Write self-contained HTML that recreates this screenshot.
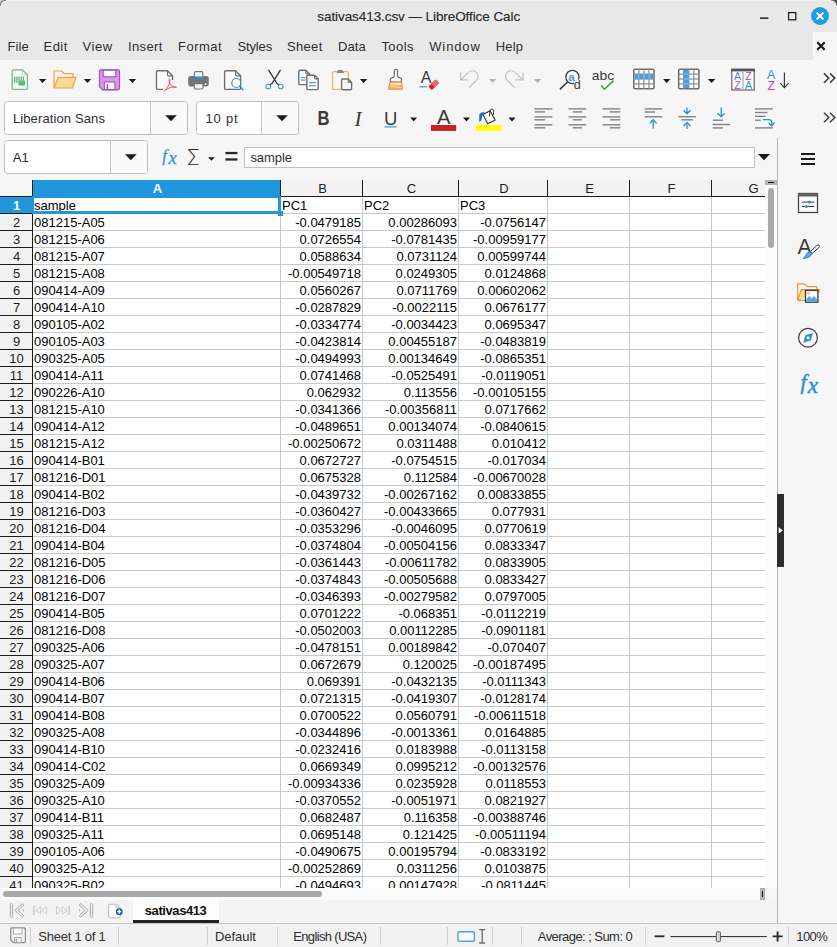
<!DOCTYPE html>
<html><head><meta charset="utf-8"><title>sativas413.csv — LibreOffice Calc</title>
<style>
*{box-sizing:border-box;margin:0;padding:0}
html,body{width:837px;height:947px;overflow:hidden;background:#f6f6f6}
body{position:relative;font-family:"Liberation Sans","DejaVu Sans",sans-serif;color:#1c1c1c;font-size:13px}
.abs{position:absolute}
.t{position:absolute;white-space:pre;line-height:1}
#title{left:0;top:0;width:837px;height:60px;background:#e8e8e8;border-top:1px solid #f0f0f0}
#grid{left:0;top:180px;width:765px;height:708px;background:#fff;overflow:hidden}
.cell{position:absolute;font-size:13px;line-height:17px;height:17px;white-space:nowrap;color:#000;overflow:hidden}
.num{text-align:right}
.rh{position:absolute;left:0;width:33px;height:17px;background:#f2f2f2;border-right:1px solid #1c1c1c;border-bottom:1px solid #1c1c1c;text-align:center;font-size:13px;line-height:17px;color:#1c1c1c;padding-left:1px}
.ch{position:absolute;top:0;height:17px;background:#f2f2f2;border-right:1px solid #1c1c1c;border-bottom:1px solid #1c1c1c;text-align:center;font-size:13px;line-height:18px;color:#1c1c1c;padding-left:2px}
.hl{position:absolute;left:33px;width:732px;height:1px;background:#c9c9c9}
.vl{position:absolute;top:17px;width:1px;height:700px;background:#c9c9c9}
.sel{background:#2196dc !important;color:#fff !important;font-weight:bold}
.box{position:absolute;background:#fff;border:1px solid #bebebe;border-radius:3.5px;overflow:hidden}
.box i{position:absolute;top:0;bottom:0;right:0;background:#fafafa;border-left:1px solid #c4c4c4}
.sep{position:absolute;top:927px;width:1px;height:18px;background:#cfcfcf}
#ov{position:absolute;left:0;top:0}
</style></head><body>

<div id="title" class="abs"></div>
<div class="abs" style="left:813px;top:32px;width:24px;height:28px;background:#f6f6f6"></div>
<div class="abs" style="left:0;top:0;width:6px;height:6px;background:radial-gradient(circle at 6px 6px,#e8e8e8 4.4px,#f2f2f2 4.9px,#7a7a7a 5.7px,#b8b8b8 6.6px,#d0d0d0 7.6px)"></div>
<div class="abs" style="left:831px;top:0;width:6px;height:6px;background:radial-gradient(circle at 0px 6px,#e8e8e8 4.4px,#f2f2f2 4.9px,#7a7a7a 5.7px,#4a4a4a 6.8px)"></div>
<div class="box" style="left:4px;top:101px;width:184px;height:34px"><i style="width:37px"></i></div>
<div class="box" style="left:196px;top:101px;width:103px;height:34px"><i style="width:37px"></i></div>
<div class="box" style="left:4px;top:140px;width:144px;height:34px"><i style="width:37px"></i></div>
<div class="abs" style="left:244px;top:147px;width:511px;height:21px;background:#fff;border:1px solid #c0c0c0"></div>
<div id="grid" class="abs">
<div class="abs" style="left:0;top:0;width:33px;height:17px;background:#f6f6f6;border-right:1px solid #1c1c1c;border-bottom:1px solid #1c1c1c"></div>
<div class="ch sel" style="left:33px;width:248px">A</div>
<div class="ch" style="left:281px;width:82px">B</div>
<div class="ch" style="left:363px;width:96px">C</div>
<div class="ch" style="left:459px;width:89px">D</div>
<div class="ch" style="left:548px;width:82px">E</div>
<div class="ch" style="left:630px;width:82px">F</div>
<div class="ch" style="left:712px;width:82px">G</div>
<div class="rh sel" style="top:17px">1</div>
<div class="hl" style="top:33px"></div>
<div class="rh" style="top:34px">2</div>
<div class="hl" style="top:50px"></div>
<div class="rh" style="top:51px">3</div>
<div class="hl" style="top:67px"></div>
<div class="rh" style="top:68px">4</div>
<div class="hl" style="top:84px"></div>
<div class="rh" style="top:85px">5</div>
<div class="hl" style="top:101px"></div>
<div class="rh" style="top:102px">6</div>
<div class="hl" style="top:118px"></div>
<div class="rh" style="top:119px">7</div>
<div class="hl" style="top:135px"></div>
<div class="rh" style="top:136px">8</div>
<div class="hl" style="top:152px"></div>
<div class="rh" style="top:153px">9</div>
<div class="hl" style="top:169px"></div>
<div class="rh" style="top:170px">10</div>
<div class="hl" style="top:186px"></div>
<div class="rh" style="top:187px">11</div>
<div class="hl" style="top:203px"></div>
<div class="rh" style="top:204px">12</div>
<div class="hl" style="top:220px"></div>
<div class="rh" style="top:221px">13</div>
<div class="hl" style="top:237px"></div>
<div class="rh" style="top:238px">14</div>
<div class="hl" style="top:254px"></div>
<div class="rh" style="top:255px">15</div>
<div class="hl" style="top:271px"></div>
<div class="rh" style="top:272px">16</div>
<div class="hl" style="top:288px"></div>
<div class="rh" style="top:289px">17</div>
<div class="hl" style="top:305px"></div>
<div class="rh" style="top:306px">18</div>
<div class="hl" style="top:322px"></div>
<div class="rh" style="top:323px">19</div>
<div class="hl" style="top:339px"></div>
<div class="rh" style="top:340px">20</div>
<div class="hl" style="top:356px"></div>
<div class="rh" style="top:357px">21</div>
<div class="hl" style="top:373px"></div>
<div class="rh" style="top:374px">22</div>
<div class="hl" style="top:390px"></div>
<div class="rh" style="top:391px">23</div>
<div class="hl" style="top:407px"></div>
<div class="rh" style="top:408px">24</div>
<div class="hl" style="top:424px"></div>
<div class="rh" style="top:425px">25</div>
<div class="hl" style="top:441px"></div>
<div class="rh" style="top:442px">26</div>
<div class="hl" style="top:458px"></div>
<div class="rh" style="top:459px">27</div>
<div class="hl" style="top:475px"></div>
<div class="rh" style="top:476px">28</div>
<div class="hl" style="top:492px"></div>
<div class="rh" style="top:493px">29</div>
<div class="hl" style="top:509px"></div>
<div class="rh" style="top:510px">30</div>
<div class="hl" style="top:526px"></div>
<div class="rh" style="top:527px">31</div>
<div class="hl" style="top:543px"></div>
<div class="rh" style="top:544px">32</div>
<div class="hl" style="top:560px"></div>
<div class="rh" style="top:561px">33</div>
<div class="hl" style="top:577px"></div>
<div class="rh" style="top:578px">34</div>
<div class="hl" style="top:594px"></div>
<div class="rh" style="top:595px">35</div>
<div class="hl" style="top:611px"></div>
<div class="rh" style="top:612px">36</div>
<div class="hl" style="top:628px"></div>
<div class="rh" style="top:629px">37</div>
<div class="hl" style="top:645px"></div>
<div class="rh" style="top:646px">38</div>
<div class="hl" style="top:662px"></div>
<div class="rh" style="top:663px">39</div>
<div class="hl" style="top:679px"></div>
<div class="rh" style="top:680px">40</div>
<div class="hl" style="top:696px"></div>
<div class="rh" style="top:697px">41</div>
<div class="hl" style="top:713px"></div>
<div class="vl" style="left:280px"></div>
<div class="vl" style="left:362px"></div>
<div class="vl" style="left:458px"></div>
<div class="vl" style="left:547px"></div>
<div class="vl" style="left:629px"></div>
<div class="vl" style="left:711px"></div>
<div class="vl" style="left:793px"></div>
<div class="cell" style="left:33px;top:17px;width:247px;padding-left:1px">sample</div>
<div class="cell" style="left:281px;top:17px;width:81px;padding-left:1px">PC1</div>
<div class="cell" style="left:363px;top:17px;width:95px;padding-left:1px">PC2</div>
<div class="cell" style="left:459px;top:17px;width:88px;padding-left:1px">PC3</div>
<div class="cell" style="left:33px;top:34px;width:247px;padding-left:1px">081215-A05</div>
<div class="cell num" style="left:281px;top:34px;width:81px;padding-right:1px">-0.0479185</div>
<div class="cell num" style="left:363px;top:34px;width:95px;padding-right:1px">0.00286093</div>
<div class="cell num" style="left:459px;top:34px;width:88px;padding-right:1px">-0.0756147</div>
<div class="cell" style="left:33px;top:51px;width:247px;padding-left:1px">081215-A06</div>
<div class="cell num" style="left:281px;top:51px;width:81px;padding-right:1px">0.0726554</div>
<div class="cell num" style="left:363px;top:51px;width:95px;padding-right:1px">-0.0781435</div>
<div class="cell num" style="left:459px;top:51px;width:88px;padding-right:1px">-0.00959177</div>
<div class="cell" style="left:33px;top:68px;width:247px;padding-left:1px">081215-A07</div>
<div class="cell num" style="left:281px;top:68px;width:81px;padding-right:1px">0.0588634</div>
<div class="cell num" style="left:363px;top:68px;width:95px;padding-right:1px">0.0731124</div>
<div class="cell num" style="left:459px;top:68px;width:88px;padding-right:1px">0.00599744</div>
<div class="cell" style="left:33px;top:85px;width:247px;padding-left:1px">081215-A08</div>
<div class="cell num" style="left:281px;top:85px;width:81px;padding-right:1px">-0.00549718</div>
<div class="cell num" style="left:363px;top:85px;width:95px;padding-right:1px">0.0249305</div>
<div class="cell num" style="left:459px;top:85px;width:88px;padding-right:1px">0.0124868</div>
<div class="cell" style="left:33px;top:102px;width:247px;padding-left:1px">090414-A09</div>
<div class="cell num" style="left:281px;top:102px;width:81px;padding-right:1px">0.0560267</div>
<div class="cell num" style="left:363px;top:102px;width:95px;padding-right:1px">0.0711769</div>
<div class="cell num" style="left:459px;top:102px;width:88px;padding-right:1px">0.00602062</div>
<div class="cell" style="left:33px;top:119px;width:247px;padding-left:1px">090414-A10</div>
<div class="cell num" style="left:281px;top:119px;width:81px;padding-right:1px">-0.0287829</div>
<div class="cell num" style="left:363px;top:119px;width:95px;padding-right:1px">-0.0022115</div>
<div class="cell num" style="left:459px;top:119px;width:88px;padding-right:1px">0.0676177</div>
<div class="cell" style="left:33px;top:136px;width:247px;padding-left:1px">090105-A02</div>
<div class="cell num" style="left:281px;top:136px;width:81px;padding-right:1px">-0.0334774</div>
<div class="cell num" style="left:363px;top:136px;width:95px;padding-right:1px">-0.0034423</div>
<div class="cell num" style="left:459px;top:136px;width:88px;padding-right:1px">0.0695347</div>
<div class="cell" style="left:33px;top:153px;width:247px;padding-left:1px">090105-A03</div>
<div class="cell num" style="left:281px;top:153px;width:81px;padding-right:1px">-0.0423814</div>
<div class="cell num" style="left:363px;top:153px;width:95px;padding-right:1px">0.00455187</div>
<div class="cell num" style="left:459px;top:153px;width:88px;padding-right:1px">-0.0483819</div>
<div class="cell" style="left:33px;top:170px;width:247px;padding-left:1px">090325-A05</div>
<div class="cell num" style="left:281px;top:170px;width:81px;padding-right:1px">-0.0494993</div>
<div class="cell num" style="left:363px;top:170px;width:95px;padding-right:1px">0.00134649</div>
<div class="cell num" style="left:459px;top:170px;width:88px;padding-right:1px">-0.0865351</div>
<div class="cell" style="left:33px;top:187px;width:247px;padding-left:1px">090414-A11</div>
<div class="cell num" style="left:281px;top:187px;width:81px;padding-right:1px">0.0741468</div>
<div class="cell num" style="left:363px;top:187px;width:95px;padding-right:1px">-0.0525491</div>
<div class="cell num" style="left:459px;top:187px;width:88px;padding-right:1px">-0.0119051</div>
<div class="cell" style="left:33px;top:204px;width:247px;padding-left:1px">090226-A10</div>
<div class="cell num" style="left:281px;top:204px;width:81px;padding-right:1px">0.062932</div>
<div class="cell num" style="left:363px;top:204px;width:95px;padding-right:1px">0.113556</div>
<div class="cell num" style="left:459px;top:204px;width:88px;padding-right:1px">-0.00105155</div>
<div class="cell" style="left:33px;top:221px;width:247px;padding-left:1px">081215-A10</div>
<div class="cell num" style="left:281px;top:221px;width:81px;padding-right:1px">-0.0341366</div>
<div class="cell num" style="left:363px;top:221px;width:95px;padding-right:1px">-0.00356811</div>
<div class="cell num" style="left:459px;top:221px;width:88px;padding-right:1px">0.0717662</div>
<div class="cell" style="left:33px;top:238px;width:247px;padding-left:1px">090414-A12</div>
<div class="cell num" style="left:281px;top:238px;width:81px;padding-right:1px">-0.0489651</div>
<div class="cell num" style="left:363px;top:238px;width:95px;padding-right:1px">0.00134074</div>
<div class="cell num" style="left:459px;top:238px;width:88px;padding-right:1px">-0.0840615</div>
<div class="cell" style="left:33px;top:255px;width:247px;padding-left:1px">081215-A12</div>
<div class="cell num" style="left:281px;top:255px;width:81px;padding-right:1px">-0.00250672</div>
<div class="cell num" style="left:363px;top:255px;width:95px;padding-right:1px">0.0311488</div>
<div class="cell num" style="left:459px;top:255px;width:88px;padding-right:1px">0.010412</div>
<div class="cell" style="left:33px;top:272px;width:247px;padding-left:1px">090414-B01</div>
<div class="cell num" style="left:281px;top:272px;width:81px;padding-right:1px">0.0672727</div>
<div class="cell num" style="left:363px;top:272px;width:95px;padding-right:1px">-0.0754515</div>
<div class="cell num" style="left:459px;top:272px;width:88px;padding-right:1px">-0.017034</div>
<div class="cell" style="left:33px;top:289px;width:247px;padding-left:1px">081216-D01</div>
<div class="cell num" style="left:281px;top:289px;width:81px;padding-right:1px">0.0675328</div>
<div class="cell num" style="left:363px;top:289px;width:95px;padding-right:1px">0.112584</div>
<div class="cell num" style="left:459px;top:289px;width:88px;padding-right:1px">-0.00670028</div>
<div class="cell" style="left:33px;top:306px;width:247px;padding-left:1px">090414-B02</div>
<div class="cell num" style="left:281px;top:306px;width:81px;padding-right:1px">-0.0439732</div>
<div class="cell num" style="left:363px;top:306px;width:95px;padding-right:1px">-0.00267162</div>
<div class="cell num" style="left:459px;top:306px;width:88px;padding-right:1px">0.00833855</div>
<div class="cell" style="left:33px;top:323px;width:247px;padding-left:1px">081216-D03</div>
<div class="cell num" style="left:281px;top:323px;width:81px;padding-right:1px">-0.0360427</div>
<div class="cell num" style="left:363px;top:323px;width:95px;padding-right:1px">-0.00433665</div>
<div class="cell num" style="left:459px;top:323px;width:88px;padding-right:1px">0.077931</div>
<div class="cell" style="left:33px;top:340px;width:247px;padding-left:1px">081216-D04</div>
<div class="cell num" style="left:281px;top:340px;width:81px;padding-right:1px">-0.0353296</div>
<div class="cell num" style="left:363px;top:340px;width:95px;padding-right:1px">-0.0046095</div>
<div class="cell num" style="left:459px;top:340px;width:88px;padding-right:1px">0.0770619</div>
<div class="cell" style="left:33px;top:357px;width:247px;padding-left:1px">090414-B04</div>
<div class="cell num" style="left:281px;top:357px;width:81px;padding-right:1px">-0.0374804</div>
<div class="cell num" style="left:363px;top:357px;width:95px;padding-right:1px">-0.00504156</div>
<div class="cell num" style="left:459px;top:357px;width:88px;padding-right:1px">0.0833347</div>
<div class="cell" style="left:33px;top:374px;width:247px;padding-left:1px">081216-D05</div>
<div class="cell num" style="left:281px;top:374px;width:81px;padding-right:1px">-0.0361443</div>
<div class="cell num" style="left:363px;top:374px;width:95px;padding-right:1px">-0.00611782</div>
<div class="cell num" style="left:459px;top:374px;width:88px;padding-right:1px">0.0833905</div>
<div class="cell" style="left:33px;top:391px;width:247px;padding-left:1px">081216-D06</div>
<div class="cell num" style="left:281px;top:391px;width:81px;padding-right:1px">-0.0374843</div>
<div class="cell num" style="left:363px;top:391px;width:95px;padding-right:1px">-0.00505688</div>
<div class="cell num" style="left:459px;top:391px;width:88px;padding-right:1px">0.0833427</div>
<div class="cell" style="left:33px;top:408px;width:247px;padding-left:1px">081216-D07</div>
<div class="cell num" style="left:281px;top:408px;width:81px;padding-right:1px">-0.0346393</div>
<div class="cell num" style="left:363px;top:408px;width:95px;padding-right:1px">-0.00279582</div>
<div class="cell num" style="left:459px;top:408px;width:88px;padding-right:1px">0.0797005</div>
<div class="cell" style="left:33px;top:425px;width:247px;padding-left:1px">090414-B05</div>
<div class="cell num" style="left:281px;top:425px;width:81px;padding-right:1px">0.0701222</div>
<div class="cell num" style="left:363px;top:425px;width:95px;padding-right:1px">-0.068351</div>
<div class="cell num" style="left:459px;top:425px;width:88px;padding-right:1px">-0.0112219</div>
<div class="cell" style="left:33px;top:442px;width:247px;padding-left:1px">081216-D08</div>
<div class="cell num" style="left:281px;top:442px;width:81px;padding-right:1px">-0.0502003</div>
<div class="cell num" style="left:363px;top:442px;width:95px;padding-right:1px">0.00112285</div>
<div class="cell num" style="left:459px;top:442px;width:88px;padding-right:1px">-0.0901181</div>
<div class="cell" style="left:33px;top:459px;width:247px;padding-left:1px">090325-A06</div>
<div class="cell num" style="left:281px;top:459px;width:81px;padding-right:1px">-0.0478151</div>
<div class="cell num" style="left:363px;top:459px;width:95px;padding-right:1px">0.00189842</div>
<div class="cell num" style="left:459px;top:459px;width:88px;padding-right:1px">-0.070407</div>
<div class="cell" style="left:33px;top:476px;width:247px;padding-left:1px">090325-A07</div>
<div class="cell num" style="left:281px;top:476px;width:81px;padding-right:1px">0.0672679</div>
<div class="cell num" style="left:363px;top:476px;width:95px;padding-right:1px">0.120025</div>
<div class="cell num" style="left:459px;top:476px;width:88px;padding-right:1px">-0.00187495</div>
<div class="cell" style="left:33px;top:493px;width:247px;padding-left:1px">090414-B06</div>
<div class="cell num" style="left:281px;top:493px;width:81px;padding-right:1px">0.069391</div>
<div class="cell num" style="left:363px;top:493px;width:95px;padding-right:1px">-0.0432135</div>
<div class="cell num" style="left:459px;top:493px;width:88px;padding-right:1px">-0.0111343</div>
<div class="cell" style="left:33px;top:510px;width:247px;padding-left:1px">090414-B07</div>
<div class="cell num" style="left:281px;top:510px;width:81px;padding-right:1px">0.0721315</div>
<div class="cell num" style="left:363px;top:510px;width:95px;padding-right:1px">-0.0419307</div>
<div class="cell num" style="left:459px;top:510px;width:88px;padding-right:1px">-0.0128174</div>
<div class="cell" style="left:33px;top:527px;width:247px;padding-left:1px">090414-B08</div>
<div class="cell num" style="left:281px;top:527px;width:81px;padding-right:1px">0.0700522</div>
<div class="cell num" style="left:363px;top:527px;width:95px;padding-right:1px">0.0560791</div>
<div class="cell num" style="left:459px;top:527px;width:88px;padding-right:1px">-0.00611518</div>
<div class="cell" style="left:33px;top:544px;width:247px;padding-left:1px">090325-A08</div>
<div class="cell num" style="left:281px;top:544px;width:81px;padding-right:1px">-0.0344896</div>
<div class="cell num" style="left:363px;top:544px;width:95px;padding-right:1px">-0.0013361</div>
<div class="cell num" style="left:459px;top:544px;width:88px;padding-right:1px">0.0164885</div>
<div class="cell" style="left:33px;top:561px;width:247px;padding-left:1px">090414-B10</div>
<div class="cell num" style="left:281px;top:561px;width:81px;padding-right:1px">-0.0232416</div>
<div class="cell num" style="left:363px;top:561px;width:95px;padding-right:1px">0.0183988</div>
<div class="cell num" style="left:459px;top:561px;width:88px;padding-right:1px">-0.0113158</div>
<div class="cell" style="left:33px;top:578px;width:247px;padding-left:1px">090414-C02</div>
<div class="cell num" style="left:281px;top:578px;width:81px;padding-right:1px">0.0669349</div>
<div class="cell num" style="left:363px;top:578px;width:95px;padding-right:1px">0.0995212</div>
<div class="cell num" style="left:459px;top:578px;width:88px;padding-right:1px">-0.00132576</div>
<div class="cell" style="left:33px;top:595px;width:247px;padding-left:1px">090325-A09</div>
<div class="cell num" style="left:281px;top:595px;width:81px;padding-right:1px">-0.00934336</div>
<div class="cell num" style="left:363px;top:595px;width:95px;padding-right:1px">0.0235928</div>
<div class="cell num" style="left:459px;top:595px;width:88px;padding-right:1px">0.0118553</div>
<div class="cell" style="left:33px;top:612px;width:247px;padding-left:1px">090325-A10</div>
<div class="cell num" style="left:281px;top:612px;width:81px;padding-right:1px">-0.0370552</div>
<div class="cell num" style="left:363px;top:612px;width:95px;padding-right:1px">-0.0051971</div>
<div class="cell num" style="left:459px;top:612px;width:88px;padding-right:1px">0.0821927</div>
<div class="cell" style="left:33px;top:629px;width:247px;padding-left:1px">090414-B11</div>
<div class="cell num" style="left:281px;top:629px;width:81px;padding-right:1px">0.0682487</div>
<div class="cell num" style="left:363px;top:629px;width:95px;padding-right:1px">0.116358</div>
<div class="cell num" style="left:459px;top:629px;width:88px;padding-right:1px">-0.00388746</div>
<div class="cell" style="left:33px;top:646px;width:247px;padding-left:1px">090325-A11</div>
<div class="cell num" style="left:281px;top:646px;width:81px;padding-right:1px">0.0695148</div>
<div class="cell num" style="left:363px;top:646px;width:95px;padding-right:1px">0.121425</div>
<div class="cell num" style="left:459px;top:646px;width:88px;padding-right:1px">-0.00511194</div>
<div class="cell" style="left:33px;top:663px;width:247px;padding-left:1px">090105-A06</div>
<div class="cell num" style="left:281px;top:663px;width:81px;padding-right:1px">-0.0490675</div>
<div class="cell num" style="left:363px;top:663px;width:95px;padding-right:1px">0.00195794</div>
<div class="cell num" style="left:459px;top:663px;width:88px;padding-right:1px">-0.0833192</div>
<div class="cell" style="left:33px;top:680px;width:247px;padding-left:1px">090325-A12</div>
<div class="cell num" style="left:281px;top:680px;width:81px;padding-right:1px">-0.00252869</div>
<div class="cell num" style="left:363px;top:680px;width:95px;padding-right:1px">0.0311256</div>
<div class="cell num" style="left:459px;top:680px;width:88px;padding-right:1px">0.0103875</div>
<div class="cell" style="left:33px;top:697px;width:247px;padding-left:1px">090325-B02</div>
<div class="cell num" style="left:281px;top:697px;width:81px;padding-right:1px">-0.0494693</div>
<div class="cell num" style="left:363px;top:697px;width:95px;padding-right:1px">0.00147928</div>
<div class="cell num" style="left:459px;top:697px;width:88px;padding-right:1px">-0.0811445</div>
<div class="abs" style="left:32px;top:16px;width:249px;height:18px;border:solid #2196dc;border-width:2px 3px 3px 2px"></div>
<div class="abs" style="left:278px;top:31px;width:5px;height:5px;background:#2196dc"></div>
</div>
<div class="abs" style="left:765px;top:180px;width:12px;height:708px;background:#fbfbfb"></div>
<div class="abs" style="left:765px;top:180px;width:12px;height:5px;background:#b2b2b2"></div>
<div class="abs" style="left:768px;top:182px;width:6px;height:1px;background:#111"></div>
<div class="abs" style="left:768px;top:188px;width:6px;height:60px;background:#a9a9a9;border-radius:3px"></div>
<div class="abs" style="left:777px;top:138px;width:1px;height:786px;background:#b8b8b8"></div>
<div class="abs" style="left:777px;top:494px;width:7px;height:73px;background:#2d2d2d"></div>
<div class="abs" style="left:0;top:888px;width:765px;height:12px;background:#fbfbfb"></div>
<div class="abs" style="left:3px;top:891px;width:319px;height:6px;background:#a9a9a9;border-radius:3px"></div>
<div class="abs" style="left:760px;top:888px;width:5px;height:12px;background:#b2b2b2"></div>
<div class="abs" style="left:762px;top:891px;width:1px;height:6px;background:#111"></div>
<div class="abs" style="left:0;top:900px;width:777px;height:23px;background:#f3f3f3"></div>
<div class="abs" style="left:133px;top:900px;width:86px;height:23px;background:#fcfcfc;border-bottom:3px solid #222"></div>
<div class="abs" style="left:0;top:923px;width:837px;height:1px;background:#c4c4c4"></div>
<div class="abs" style="left:0;top:924px;width:837px;height:23px;background:#f1f1f1"></div>
<div class="sep" style="left:30px"></div>
<div class="sep" style="left:118px"></div>
<div class="sep" style="left:207px"></div>
<div class="sep" style="left:277px"></div>
<div class="sep" style="left:380px"></div>
<div class="sep" style="left:447px"></div>
<div class="sep" style="left:492px"></div>
<div class="sep" style="left:521px"></div>
<div class="sep" style="left:645px"></div>
<div class="sep" style="left:788px"></div>
<div class="t" style="left:317.30px;top:9.57px;font-size:13.5px;letter-spacing:-0.077px;color:#2a2a2a;-webkit-text-stroke:0.15px #2a2a2a;">sativas413.csv — LibreOffice Calc</div>
<div class="t" style="left:7.60px;top:39.60px;font-size:13px;letter-spacing:0.037px;color:#2e2e2e;">File</div>
<div class="t" style="left:43.50px;top:39.60px;font-size:13px;letter-spacing:0.473px;color:#2e2e2e;">Edit</div>
<div class="t" style="left:82.60px;top:39.60px;font-size:13px;letter-spacing:0.512px;color:#2e2e2e;">View</div>
<div class="t" style="left:128.10px;top:39.60px;font-size:13px;letter-spacing:0.331px;color:#2e2e2e;">Insert</div>
<div class="t" style="left:178.00px;top:39.60px;font-size:13px;letter-spacing:0.505px;color:#2e2e2e;">Format</div>
<div class="t" style="left:237.50px;top:39.60px;font-size:13px;letter-spacing:-0.151px;color:#2e2e2e;">Styles</div>
<div class="t" style="left:287.00px;top:39.60px;font-size:13px;letter-spacing:0.323px;color:#2e2e2e;">Sheet</div>
<div class="t" style="left:337.90px;top:39.60px;font-size:13px;letter-spacing:0.158px;color:#2e2e2e;">Data</div>
<div class="t" style="left:381.40px;top:39.60px;font-size:13px;letter-spacing:0.428px;color:#2e2e2e;">Tools</div>
<div class="t" style="left:429.20px;top:39.60px;font-size:13px;letter-spacing:0.892px;color:#2e2e2e;">Window</div>
<div class="t" style="left:495.80px;top:39.60px;font-size:13px;letter-spacing:0.188px;color:#2e2e2e;">Help</div>
<div class="t" style="left:12.90px;top:112.00px;font-size:13px;letter-spacing:0.124px;color:#2e2e2e;">Liberation Sans</div>
<div class="t" style="left:205.50px;top:112.00px;font-size:13px;letter-spacing:0.816px;color:#2e2e2e;">10 pt</div>
<div class="t" style="left:12.70px;top:151.00px;font-size:13px;letter-spacing:0.247px;color:#2e2e2e;">A1</div>
<div class="t" style="left:250.40px;top:151.00px;font-size:13px;letter-spacing:-0.054px;color:#2e2e2e;">sample</div>
<div class="t" style="left:144.80px;top:903.70px;font-size:13px;letter-spacing:-0.418px;color:#111;font-weight:bold;">sativas413</div>
<div class="t" style="left:38.20px;top:930.00px;font-size:13px;letter-spacing:-0.227px;color:#2e2e2e;">Sheet 1 of 1</div>
<div class="t" style="left:214.90px;top:930.00px;font-size:13px;letter-spacing:-0.029px;color:#2e2e2e;">Default</div>
<div class="t" style="left:293.30px;top:930.00px;font-size:13px;letter-spacing:-0.665px;color:#2e2e2e;">English (USA)</div>
<div class="t" style="left:537.80px;top:930.00px;font-size:13px;letter-spacing:-0.555px;color:#2e2e2e;">Average: ; Sum: 0</div>
<div class="t" style="left:796.30px;top:930.00px;font-size:13px;letter-spacing:-0.588px;color:#2e2e2e;">100%</div>
<svg id="ov" width="837" height="947" viewBox="0 0 837 947" font-family="Liberation Sans, sans-serif">
<rect x="760" y="17.4" width="8.4" height="1.5" fill="#222"/>
<rect x="788.6" y="12.6" width="7.2" height="7.2" fill="none" stroke="#222" stroke-width="1.3"/>
<circle cx="820" cy="16" r="9" fill="#1f9ede"/>
<path d="M816.6 12.6l6.8 6.8M823.4 12.6l-6.8 6.8" stroke="#fff" stroke-width="2" stroke-linecap="butt"/>
<path d="M817.3 42.3l7.4 7.4M824.7 42.3l-7.4 7.4" stroke="#1a1a1a" stroke-width="2.2"/>
<path d="M38.90 78.90h7.4l-3.70 4.2z" fill="#1a1a1a"/>
<path d="M83.80 78.90h7.4l-3.70 4.2z" fill="#1a1a1a"/>
<path d="M128.70 78.90h7.4l-3.70 4.2z" fill="#1a1a1a"/>
<path d="M359.90 78.90h7.4l-3.70 4.2z" fill="#1a1a1a"/>
<path d="M663.00 78.90h7.4l-3.70 4.2z" fill="#1a1a1a"/>
<path d="M707.90 78.90h7.4l-3.70 4.2z" fill="#1a1a1a"/>
<path d="M488.90 78.90h7.4l-3.70 4.2z" fill="#b4b4b4"/>
<path d="M533.80 78.90h7.4l-3.70 4.2z" fill="#b4b4b4"/>
<path d="M410.10 117.50h7l-3.50 4z" fill="#1a1a1a"/>
<path d="M463.00 117.50h7l-3.50 4z" fill="#1a1a1a"/>
<path d="M508.50 117.50h7l-3.50 4z" fill="#1a1a1a"/>
<path d="M208.10 157.30h6.6l-3.30 3.4z" fill="#1a1a1a"/>
<path d="M165.20 115.20h11.6l-5.80 6z" fill="#1a1a1a"/>
<path d="M276.20 115.20h11.6l-5.80 6z" fill="#1a1a1a"/>
<path d="M125.00 154.30h11.6l-5.80 6z" fill="#1a1a1a"/>
<path d="M758.00 154.00h12l-6.00 6.2z" fill="#1a1a1a"/>
<g><path d="M13.400 69.800h8.600l5.400 5v13.400q0 1.200-1.200 1.200h-12.800q-1.200 0-1.200-1.200v-17.200q0-1.200 1.200-1.200z" fill="#fff" stroke="#72b88b" stroke-width="1.300" stroke-linejoin="round"/><path d="M22 69.800v3.800q0 1.200 1.200 1.200h4.200" fill="none" stroke="#9fd0b0" stroke-width="1"/><path d="M14.700 76.500v6.600M16.900 76.500v6.600M19.100 76.500v4M21.300 76.500v4M23.400 76.500v4" stroke="#6ab184" stroke-width="1.400"/><rect x="18.400" y="80.600" width="6.600" height="4.800" rx=".6" fill="#4cba6c"/><path d="M19.600 82.300h4.200" stroke="#9fe0b0" stroke-width=".8" stroke-dasharray="1.200 .600"/></g>
<g stroke="#ef9f4f" stroke-width="1.2" stroke-linejoin="round"><path d="M54 87.5v-16.5h7.5l2.5 2.6h9v4" fill="#fef9f0"/><path d="M54 88l4.2-10.6h17.8l-3.6 10.6z" fill="#f9dd8f"/></g>
<g><path d="M100.5 69.8h17.5q1.5 0 1.5 1.5v17q0 1.5-1.5 1.5h-15.5l-3-3v-15.5q0-1.5 1-1.5z" fill="#d899e2" stroke="#ab4cc0" stroke-width="1.2"/><rect x="103.200" y="70.200" width="12.600" height="6.600" fill="#fff" stroke="#a341b9" stroke-width="1"/><rect x="104.300" y="82" width="10.600" height="7.600" fill="#fff" stroke="#a341b9" stroke-width="1"/><rect x="106.700" y="84" width="1.300" height="5.200" fill="#a341b9"/></g>
<path d="M157.7 70.8h9.8l5 5v12.400000000000002q0 1.2 -1.2 1.2h-13.6q-1.2 0 -1.2 -1.2v-16.200000000000003q0 -1.2 1.2 -1.2z" fill="#fbfbfb" stroke="#6f6f6f" stroke-width="1.4" stroke-linejoin="round"/><path d="M167.5 70.8v4q0 1 1 1h4" fill="none" stroke="#6f6f6f" stroke-width="1.19" stroke-linejoin="round"/>
<rect x="163" y="80" width="13" height="11" fill="#f6f6f6"/>
<path d="M164.5 90.5c3-2.5 5.2-6.5 5.6-10.5c.1-1.2-1.3-1.2-1.2 0c.4 4 3.2 7 6.8 7.6c1 .1 1-1 0-1c-3.8.2-8 1.7-11.2 3.9z" fill="none" stroke="#e8474c" stroke-width=".9" stroke-linejoin="round"/>
<g><rect x="188.200" y="75.900" width="20.600" height="10.600" rx="2.400" fill="#757575"/><path d="M194.400 77v-4.200q0-1.200 1.200-1.200h6q1.200 0 1.200 1.200v4.200z" fill="#fbfbfb" stroke="#757575" stroke-width="1.100"/><rect x="193" y="76.900" width="11.400" height="2" fill="#2f8fd6"/><path d="M194.200 83.600h8.800v4.200q0 1.200-1.200 1.200h-6.400q-1.200 0-1.200-1.200z" fill="#f2f2f2" stroke="#757575" stroke-width="1.100"/><rect x="204.900" y="83.400" width="1.500" height="1.500" fill="#fff"/></g>
<path d="M225.79999999999998 70.8h9.8l5 5v12.400000000000002q0 1.2 -1.2 1.2h-13.6q-1.2 0 -1.2 -1.2v-16.200000000000003q0 -1.2 1.2 -1.2z" fill="#fbfbfb" stroke="#6f6f6f" stroke-width="1.4" stroke-linejoin="round"/><path d="M235.6 70.8v4q0 1 1 1h4" fill="none" stroke="#6f6f6f" stroke-width="1.19" stroke-linejoin="round"/>
<circle cx="236.300" cy="83" r="4.500" fill="#fff" stroke="#2f8fd6" stroke-width="1.200"/><path d="M239.600 86.300l3.400 3.500" stroke="#2f8fd6" stroke-width="1.400" stroke-linecap="round"/>
<g><path d="M268.8 70.3l8.2 13.2M280.2 70.3l-8.2 13.2" stroke="#3a3a3a" stroke-width="1.4" stroke-linecap="round"/><circle cx="268.2" cy="86.5" r="2.3" fill="#fff" stroke="#3f97da" stroke-width="1.1"/><circle cx="280.7" cy="86.5" r="2.3" fill="#fff" stroke="#3f97da" stroke-width="1.1"/><path d="M272 83.5l-2 1.2M277 83.5l2 1.2" stroke="#3a3a3a" stroke-width="1.3"/></g>
<path d="M300.0 70.2h5.8l3.6 3.6v9.600000000000001q0 1.2 -1.2 1.2h-8.2q-1.2 0 -1.2 -1.2v-12.0q0 -1.2 1.2 -1.2z" fill="#fbfbfb" stroke="#6f6f6f" stroke-width="1.4" stroke-linejoin="round"/><path d="M305.8 70.2v2.6q0 1 1 1h2.6" fill="none" stroke="#6f6f6f" stroke-width="1.19" stroke-linejoin="round"/>
<path d="M301 77.600h4.400M301 80.200h4.400" stroke="#4fa3df" stroke-width="1.200"/>
<path d="M308.0 75.2h6.6000000000000005l3.6 3.6v9.600000000000001q0 1.2 -1.2 1.2h-9.0q-1.2 0 -1.2 -1.2v-12.0q0 -1.2 1.2 -1.2z" fill="#fbfbfb" stroke="#6f6f6f" stroke-width="1.4" stroke-linejoin="round"/><path d="M314.59999999999997 75.2v2.6q0 1 1 1h2.6" fill="none" stroke="#6f6f6f" stroke-width="1.19" stroke-linejoin="round"/>
<path d="M309 82.600h6.800M309 85.600h6.800" stroke="#4fa3df" stroke-width="1.300"/>
<g><rect x="332.6" y="71.6" width="15.8" height="17.8" rx="1.2" fill="#fcfaf8" stroke="#f2ae72" stroke-width="1.3"/><path d="M337.2 72.6l1.4-2.2h3.6l1.4 2.2z" fill="#888" stroke="#777" stroke-width="0.8"/></g>
<path d="M342.8 79h5.3999999999999995l3.4 3.4v6.2q0 1.2 -1.2 1.2h-7.6q-1.2 0 -1.2 -1.2v-8.4q0 -1.2 1.2 -1.2z" fill="#fbfbfb" stroke="#6f6f6f" stroke-width="1.4" stroke-linejoin="round"/><path d="M348.20000000000005 79v2.4q0 1 1 1h2.4" fill="none" stroke="#6f6f6f" stroke-width="1.19" stroke-linejoin="round"/>
<g><path d="M394.300 70.400q1.600-2 3.200 0v5.400q0 1.400 1.400 1.800l1.600.5q1 .4 1 1.400v2.500h-11.200v-2.500q0-1 1-1.400l1.600-.5q1.400-.4 1.400-1.800z" fill="#fcfcfc" stroke="#6f6f6f" stroke-width="1.200" stroke-linejoin="round"/><path d="M390 82h11.600l.8 7.200h-14z" fill="#f7b26c" stroke="#ee8a35" stroke-width="1" stroke-linejoin="round"/><path d="M390.200 83.300h11l.2 1.800l-11.400-.600z" fill="#fdf0e0"/><path d="M389.600 86.200l12.200 1.400" stroke="#fbd9b4" stroke-width=".9"/></g>
<text x="420.800" y="82.700" font-size="16" fill="#3a3a3a">A</text>
<rect x="419.400" y="86.100" width="7.400" height="1.400" fill="#4fa3df"/>
<g transform="rotate(-45 433.700 84.800)"><rect x="428.700" y="82.300" width="10.200" height="5" rx=".8" fill="#d81e1e"/><rect x="432.600" y="82.300" width="6.300" height="5" rx=".8" fill="#f0666e"/></g>
<path d="M460.600 72.400V79.900H468.200M461 79.500L468.400 72.400A5.600 5.600 0 0 1 476.400 80.400L469.100 87.700" fill="none" stroke="#c2c2c2" stroke-width="1.200"/>
<path d="M523.0 72.400V79.900H515.4M522.6 79.500L515.2 72.400A5.600 5.600 0 0 0 507.2 80.400L514.5 87.700" fill="none" stroke="#c2c2c2" stroke-width="1.200"/>
<circle cx="572.4" cy="77" r="6.6" fill="#fff" stroke="#3a3a3a" stroke-width="1.3"/><rect x="574" y="79.600" width="7" height="6" fill="#f6f6f6"/><path d="M567.4 82l-7 6.8" stroke="#3a3a3a" stroke-width="1.7" stroke-linecap="round"/>
<text x="568.300" y="81.300" font-size="11.800" font-weight="bold" fill="#3f9be0">a</text><text x="573.800" y="88.900" font-size="12.600" fill="#3a3a3a">d</text>
<text x="591.8" y="79.8" font-size="12.6" fill="#3a3a3a" textLength="22.4" lengthAdjust="spacingAndGlyphs">abc</text>
<path d="M601 85.6l3.4 3.6l9.2-8.6" fill="none" stroke="#2aa744" stroke-width="1.5"/>
<rect x="633.8" y="69.2" width="20.2" height="19.6" rx="1.4" fill="#fff" stroke="#6a6a6a" stroke-width="1.5"/>
<path d="M638.85 69.2v19.6" stroke="#8a8a8a" stroke-width="1.2"/>
<path d="M643.90 69.2v19.6" stroke="#8a8a8a" stroke-width="1.2"/>
<path d="M648.95 69.2v19.6" stroke="#8a8a8a" stroke-width="1.2"/>
<path d="M633.8 74.10h20.2" stroke="#8a8a8a" stroke-width="1.2"/>
<path d="M633.8 79.00h20.2" stroke="#8a8a8a" stroke-width="1.2"/>
<path d="M633.8 83.90h20.2" stroke="#8a8a8a" stroke-width="1.2"/>
<rect x="634.5" y="74.10" width="18.8" height="4.90" fill="#4a9edc"/>
<path d="M638.85 74.10v4.90" stroke="#8cc2ec" stroke-width="1"/>
<path d="M643.90 74.10v4.90" stroke="#8cc2ec" stroke-width="1"/>
<path d="M648.95 74.10v4.90" stroke="#8cc2ec" stroke-width="1"/>
<rect x="678.7" y="69.2" width="20.2" height="19.6" rx="1.4" fill="#fff" stroke="#6a6a6a" stroke-width="1.5"/>
<path d="M683.75 69.2v19.6" stroke="#8a8a8a" stroke-width="1.2"/>
<path d="M688.80 69.2v19.6" stroke="#8a8a8a" stroke-width="1.2"/>
<path d="M693.85 69.2v19.6" stroke="#8a8a8a" stroke-width="1.2"/>
<path d="M678.7 74.10h20.2" stroke="#8a8a8a" stroke-width="1.2"/>
<path d="M678.7 79.00h20.2" stroke="#8a8a8a" stroke-width="1.2"/>
<path d="M678.7 83.90h20.2" stroke="#8a8a8a" stroke-width="1.2"/>
<rect x="683.75" y="69.9" width="5.05" height="18.200000000000003" fill="#4a9edc"/>
<path d="M683.75 74.10h5.05" stroke="#8cc2ec" stroke-width="1"/>
<path d="M683.75 79.00h5.05" stroke="#8cc2ec" stroke-width="1"/>
<path d="M683.75 83.90h5.05" stroke="#8cc2ec" stroke-width="1"/>
<rect x="731.8" y="69.6" width="22.4" height="20.4" fill="#fff" stroke="#6e6e6e" stroke-width="1.3"/><rect x="731.2" y="68.600" width="23.600" height="2.800" fill="#555"/><path d="M743 71v19" stroke="#b4b4b4" stroke-width="1.4"/>
<text x="734" y="80.4" font-size="10.6" fill="#2f8fd6">A</text><text x="734.2" y="89" font-size="10.6" fill="#b845c4">Z</text>
<text x="745.2" y="80.4" font-size="10.6" fill="#b845c4">Z</text><text x="745" y="89" font-size="10.6" fill="#2f8fd6">A</text>
<text x="767" y="78.6" font-size="12.4" fill="#2f8fd6">A</text><text x="767.6" y="89.6" font-size="12.4" fill="#b845c4">Z</text>
<path d="M784.4 72.4v15M780.2 83.2l4.2 4.4l4.2-4.4" fill="none" stroke="#3a3a3a" stroke-width="1.2"/>
<path d="M824 73.4l4.8 4.7l-4.8 4.7M830 73.4l4.8 4.7l-4.8 4.7" fill="none" stroke="#3a3a3a" stroke-width="1.5"/>
<path d="M824 112.8l4.8 4.7l-4.8 4.7M830 112.8l4.8 4.7l-4.8 4.7" fill="none" stroke="#3a3a3a" stroke-width="1.5"/>
<text x="317.600" y="125.400" font-size="20" font-weight="bold" fill="#3a3a3a" textLength="12" lengthAdjust="spacingAndGlyphs">B</text>
<text x="354.400" y="125.700" font-size="21.500" font-style="italic" font-family="Liberation Serif, serif" fill="#3a3a3a">I</text>
<text x="383.900" y="125" font-size="19" fill="#3a3a3a" textLength="13.400" lengthAdjust="spacingAndGlyphs">U</text><rect x="384.400" y="126.100" width="12.200" height="1.500" fill="#5aaae0"/>
<text x="436.900" y="123.900" font-size="20.200" fill="#3a3a3a">A</text><rect x="431" y="125" width="25.200" height="5.900" fill="#c9211e"/>
<rect x="476" y="125" width="25.2" height="5.8" fill="#ffff00"/>
<g><path d="M483 114.4l7.1-3.6l5 9.4l-7.4 3.5z" fill="#fcfcfc" stroke="#2e2e2e" stroke-width="1.1" stroke-linejoin="round"/><path d="M489.4 116.4l.6-5.600q.6-2 2.200-1.700q1.600.5 1.500 2.400l-.3 3.400" fill="none" stroke="#2e2e2e" stroke-width="1"/><path d="M479.2 121.800v-6.600q.2-3.200 5.200-3.300l-1.300 2.500q-1.500 2.600-1.600 5.800q-.8 1.300-2.300 1.600z" fill="#1f72c8"/></g>
<rect x="534.5" y="108.20" width="17.8" height="1.4" fill="#828282"/>
<rect x="534.5" y="111.20" width="10.6" height="1.4" fill="#828282"/>
<rect x="534.5" y="116.20" width="17.8" height="1.4" fill="#828282"/>
<rect x="534.5" y="119.10" width="10.6" height="1.4" fill="#828282"/>
<rect x="534.5" y="124.10" width="17.8" height="1.4" fill="#828282"/>
<rect x="534.5" y="127.10" width="10.6" height="1.4" fill="#828282"/>
<rect x="568.5" y="108.20" width="17.8" height="1.4" fill="#828282"/>
<rect x="572.7" y="111.20" width="9.4" height="1.4" fill="#828282"/>
<rect x="568.5" y="116.20" width="17.8" height="1.4" fill="#828282"/>
<rect x="572.7" y="119.10" width="9.4" height="1.4" fill="#828282"/>
<rect x="568.5" y="124.10" width="17.8" height="1.4" fill="#828282"/>
<rect x="572.7" y="127.10" width="9.4" height="1.4" fill="#828282"/>
<rect x="602.6" y="108.20" width="17.8" height="1.4" fill="#828282"/>
<rect x="609.8" y="111.20" width="10.6" height="1.4" fill="#828282"/>
<rect x="602.6" y="116.20" width="17.8" height="1.4" fill="#828282"/>
<rect x="609.8" y="119.10" width="10.6" height="1.4" fill="#828282"/>
<rect x="602.6" y="124.10" width="17.8" height="1.4" fill="#828282"/>
<rect x="609.8" y="127.10" width="10.6" height="1.4" fill="#828282"/>
<rect x="644.7" y="108.20" width="17.6" height="1.4" fill="#828282"/>
<rect x="644.7" y="111.30" width="10.4" height="1.4" fill="#828282"/>
<rect x="644.7" y="116.10" width="17.6" height="1.4" fill="#828282"/>
<path d="M653.2 128.8V119.8M649.8000000000001 123.39999999999999l3.4-3.6l3.4 3.6" fill="none" stroke="#2f8fd6" stroke-width="1.3"/>
<path d="M687 107.6V113.8M683.6 110.2l3.4 3.6l3.4-3.6" fill="none" stroke="#2f8fd6" stroke-width="1.3"/>
<rect x="678.4" y="116.00" width="17.6" height="1.4" fill="#828282"/>
<rect x="681.4" y="119.10" width="11.6" height="1.4" fill="#828282"/>
<path d="M687 129V122.4M683.6 126.0l3.4-3.6l3.4 3.6" fill="none" stroke="#2f8fd6" stroke-width="1.3"/>
<path d="M721.2 107.6V116.8M717.8000000000001 113.2l3.4 3.6l3.4-3.6" fill="none" stroke="#2f8fd6" stroke-width="1.3"/>
<rect x="712.7" y="119.50" width="10.4" height="1.4" fill="#828282"/>
<rect x="712.7" y="123.80" width="17.6" height="1.4" fill="#828282"/>
<rect x="712.7" y="127.20" width="10.4" height="1.4" fill="#828282"/>
<rect x="755.0" y="108.20" width="17.8" height="1.4" fill="#828282"/>
<rect x="755.0" y="111.80" width="12.4" height="1.4" fill="#828282"/>
<rect x="755.0" y="115.60" width="10.4" height="1.4" fill="#828282"/>
<rect x="755.0" y="119.50" width="5.6" height="1.4" fill="#828282"/>
<rect x="755.0" y="127.20" width="17.8" height="1.4" fill="#828282"/>
<path d="M763 119.6h5.400q3.400 0 3.400 3.400v2.400M768.400 122.600l3.400 3.400l2.800-3.600" fill="none" stroke="#2f8fd6" stroke-width="1.3"/>
<text x="162.200" y="160.500" font-size="17" font-style="italic" font-family="Liberation Serif, serif" fill="#2f8fd6" stroke="#2f8fd6" stroke-width=".25">f</text><text x="168.600" y="164.300" font-size="18.500" font-style="italic" font-family="Liberation Serif, serif" fill="#2f8fd6" stroke="#2f8fd6" stroke-width=".25">x</text>
<text x="186.300" y="164.800" font-size="21.500" font-weight="200" font-family="DejaVu Sans, Liberation Sans, sans-serif" fill="#2a2a2a" textLength="13.600" lengthAdjust="spacingAndGlyphs">Σ</text>
<rect x="225.4" y="151.9" width="12" height="2.3" fill="#2a2a2a"/><rect x="225.4" y="158.3" width="12" height="2.3" fill="#2a2a2a"/>
<rect x="801" y="153" width="14" height="2" fill="#1a1a1a"/>
<rect x="801" y="158" width="14" height="2" fill="#1a1a1a"/>
<rect x="801" y="163" width="14" height="2" fill="#1a1a1a"/>
<rect x="798.500" y="193.500" width="19" height="19" fill="#fafafa" stroke="#3a3a3a" stroke-width="1.200"/><rect x="797.900" y="192.900" width="20.200" height="3.600" fill="#5e5e5e"/><path d="M802 202.100h12.200M802 206.500h12.200" stroke="#3a3a3a" stroke-width="1"/><circle cx="809.400" cy="202.100" r="1.600" fill="#2f8fd6"/><circle cx="806.400" cy="206.500" r="1.600" fill="#2f8fd6"/>
<text x="797.600" y="253.500" font-size="21.200" fill="#3a3a3a">A</text>
<path d="M810.400 251.400l6.400-5.800q1.600-1.200 2.400-.2q.8 1-.6 2.400l-6.400 5.600z" fill="#fcfcfc" stroke="#3a3a3a" stroke-width="1"/><path d="M810.200 251.800l1.800 1.800q-1.600 4.400-9 5q2-1.400 2.600-3.200q1.400-3.400 4.600-3.600z" fill="#5aa6e6" stroke="#1f72c8" stroke-width=".8" stroke-linejoin="round"/>
<g stroke="#ee8f3a" stroke-width="1.200" stroke-linejoin="round"><path d="M797.700 300.200v-16.400h6.600l2.600 2.800h9.800v3" fill="#fdfdfd"/><path d="M797.700 300.400l3.400-10.800h18.400l-1 3.400" fill="#f9dd8f"/><path d="M797.700 300.400h7.400" fill="none"/></g><rect x="805.500" y="290.400" width="12.400" height="11.800" fill="#fff" stroke="#3a3a3a" stroke-width="1.300"/><path d="M806.200 301.500v-2l3-3.400l2.400 2.400l2.400-2.600l3.200 3.400v2.200z" fill="#5aa6e6"/><circle cx="808.600" cy="293.400" r="1" fill="none" stroke="#ee8f3a" stroke-width=".8"/>
<circle cx="808" cy="337.700" r="9.400" fill="#fafafa" stroke="#3a3a3a" stroke-width="1.200"/><path d="M813 333l-2.200 7.400l-7.600 2.300l2.200-7.500z" fill="#2f8fd6"/><circle cx="808" cy="337.800" r="1.500" fill="#fafafa"/>
<text x="800.600" y="388.600" font-size="21.800" font-style="italic" font-family="Liberation Serif, serif" fill="#2f8fd6" stroke="#2f8fd6" stroke-width=".5">f</text><text x="807.800" y="392.800" font-size="23" font-style="italic" font-family="Liberation Serif, serif" fill="#2f8fd6" stroke="#2f8fd6" stroke-width=".5">x</text>
<path d="M778.600 527.200l4.200 3.200l-4.200 3.200z" fill="#fff"/>
<rect x="10.400" y="903.600" width="2.200" height="13.800" rx="1" fill="none" stroke="#ababab" stroke-width="1"/><path d="M22.400 903.600L14.800 910.400L22.400 917.200L23.800 915.600L17.900 910.400L23.800 905.200Z" fill="none" stroke="#ababab" stroke-width="1" stroke-linejoin="round"/><circle cx="23.400" cy="910.400" r=".8" fill="#ababab"/>
<rect x="33.500" y="906.500" width="1.400" height="7.800" fill="none" stroke="#cdcdcd" stroke-width=".9"/><path d="M40.700 906.500l-4.700 3.900l4.700 3.900zM46.600 906.500l-4.700 3.900l4.700 3.900z" fill="none" stroke="#cdcdcd" stroke-width="1"/>
<rect x="68.100" y="906.500" width="1.400" height="7.800" fill="none" stroke="#cdcdcd" stroke-width=".9"/><path d="M62.300 906.500l4.700 3.900l-4.700 3.900zM56.400 906.500l4.700 3.900l-4.700 3.900z" fill="none" stroke="#cdcdcd" stroke-width="1"/>
<rect x="90.400" y="903.600" width="2.200" height="13.800" rx="1" fill="none" stroke="#ababab" stroke-width="1"/><path d="M80.600 903.600L88.200 910.400L80.600 917.200L79.200 915.600L85.100 910.400L79.200 905.200Z" fill="none" stroke="#ababab" stroke-width="1" stroke-linejoin="round"/><circle cx="79.600" cy="910.400" r=".8" fill="#ababab"/>
<path d="M109.800 904.200h6.400l4 4v8.400q0 1.200-1.200 1.200h-9.200q-1.200 0-1.200-1.200v-11.200q0-1.200 1.200-1.200z" fill="#fdfdfd" stroke="#bdbdbd" stroke-width="1.100" stroke-linejoin="round"/><path d="M116.200 904.200v3q0 1 1 1h3" fill="none" stroke="#bdbdbd" stroke-width="1"/><circle cx="119.300" cy="911.700" r="3.500" fill="#1f62b8"/><path d="M117.200 911.700h4.200M119.300 909.600v4.200" stroke="#fff" stroke-width="1.300"/>
<path d="M11.600 927.800h12.400q1.400 0 1.400 1.400v12q0 1.400-1.400 1.400h-10.600l-2.600-2.600v-10.800q0-1.400.8-1.400z" fill="#f4f4f4" stroke="#8a8a8a" stroke-width="1.200"/><rect x="13.400" y="928" width="8.600" height="6" fill="#f8f8f8" stroke="#a6a6a6" stroke-width="1"/><rect x="14.400" y="937.600" width="6.800" height="5" fill="#f8f8f8" stroke="#a6a6a6" stroke-width="1"/><rect x="15.600" y="938.800" width="1.600" height="3.600" fill="#a6a6a6"/>
<rect x="458" y="931.800" width="16.400" height="9.400" rx="1" fill="#f4fafe" stroke="#4fa3df" stroke-width="1.400"/>
<path d="M482.200 929.800v13M479.200 929.600h6M479.200 943h6" stroke="#6a6a6a" stroke-width="1.300"/>
<rect x="654.600" y="935.400" width="9.800" height="1.800" fill="#2a2a2a"/>
<rect x="670.400" y="936" width="96.400" height="1.100" fill="#3a3a3a"/>
<rect x="716.400" y="931.800" width="4" height="9.800" rx="1" fill="#d8d8d8" stroke="#5a5a5a" stroke-width="1"/>
<path d="M772.600 936.400h10M777.600 931.400v10" stroke="#2a2a2a" stroke-width="1.900"/>
</svg>
</body></html>
